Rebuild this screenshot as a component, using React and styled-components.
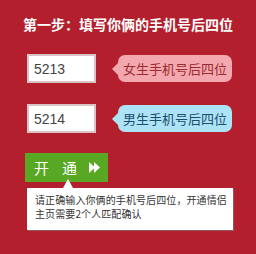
import React from 'react';
import styled, {createGlobalStyle} from 'styled-components';

const GlobalStyle = createGlobalStyle`
    html, body {
        margin: 0;
        padding: 0;
        background: #b41f2e;
    }
    * {
        box-sizing: border-box;
    }
`;

const cjk = `"Noto Sans CJK SC", "Liberation Sans", sans-serif`;

const Page = styled.div`
    width: 256px;
    height: 254px;
    background: #b41f2e;
    padding: 16px 0 0 27px;
    font-family: ${cjk};
    overflow: hidden;
`;

const Title = styled.h1`
    margin: 0 0 22px -27px;
    width: 256px;
    text-align: center;
    font-size: 14px;
    line-height: 16px;
    font-weight: bold;
    color: #fff;
`;

const Row = styled.div`
    display: flex;
    align-items: center;
    height: 29px;
    margin-bottom: ${({last}) => last ? 20 : 21}px;
`;

const Input = styled.input`
    width: 69px;
    height: 29px;
    border: 2px solid #d9c3c5;
    background: #fff;
    padding: 0 0 0 5px;
    font-family: "Liberation Sans", Arial, sans-serif;
    font-size: 14px;
    color: #444;
    outline: none;
`;

const Bubble = styled.div`
    position: relative;
    margin-left: 22px;
    width: 114px;
    height: 27px;
    border-radius: 7px;
    background: ${({boy}) => boy ? '#ade3f6' : '#f3a7ae'};
    color: ${({boy}) => boy ? '#1d4d6c' : '#9b2b30'};
    font-size: 13px;
    line-height: 27px;
    padding-left: 5px;
    white-space: nowrap;

    &::before {
        content: '';
        position: absolute;
        left: -6px;
        top: 8px;
        border-style: solid;
        border-width: 6px 6px 6px 0;
        border-color: transparent ${({boy}) => boy ? '#ade3f6' : '#f3a7ae'} transparent transparent;
    }
`;

const Button = styled.button`
    display: flex;
    align-items: center;
    margin-left: -2px;
    width: 83px;
    height: 29px;
    border: none;
    background: #58a823;
    color: #fff;
    padding: 0 0 0 9px;
    font-family: ${cjk};
    font-size: 15px;
    cursor: pointer;
`;

const ButtonLabel = styled.span`
    letter-spacing: 13px;
    margin-right: -1px;
`;

const Info = styled.div`
    position: relative;
    margin-top: 6px;
    width: 206px;
    height: 42px;
    background: #fff;
    box-shadow: 1px 1px 0 #8f5a5e;
    padding: 4.5px 0 0 8px;
    font-size: 10px;
    color: #333;
    letter-spacing: 0.1px;

    &::before {
        content: '';
        position: absolute;
        left: 36px;
        top: -9px;
        border-style: solid;
        border-width: 0 5px 9px 5px;
        border-color: transparent transparent #fff transparent;
    }
`;

const InfoLine = styled.div`
    height: 14.5px;
    line-height: 14.5px;
    white-space: nowrap;
`;

const Arrows = () => (
    <svg width="12" height="11" viewBox="0 0 12 11">
        <path d="M0 0 L6 5.5 L0 11 Z M5 0 L11 5.5 L5 11 Z" fill="#fff" />
    </svg>
);

export default function App() {
    return (
        <Page>
            <GlobalStyle />
            <Title>第一步：填写你俩的手机号后四位</Title>
            <Row>
                <Input defaultValue="5213" />
                <Bubble>女生手机号后四位</Bubble>
            </Row>
            <Row last>
                <Input defaultValue="5214" />
                <Bubble boy>男生手机号后四位</Bubble>
            </Row>
            <Button>
                <ButtonLabel>开通</ButtonLabel>
                <Arrows />
            </Button>
            <Info>
                <InfoLine>请正确输入你俩的手机号后四位，开通情侣</InfoLine>
                <InfoLine>主页需要2个人匹配确认</InfoLine>
            </Info>
        </Page>
    );
}
